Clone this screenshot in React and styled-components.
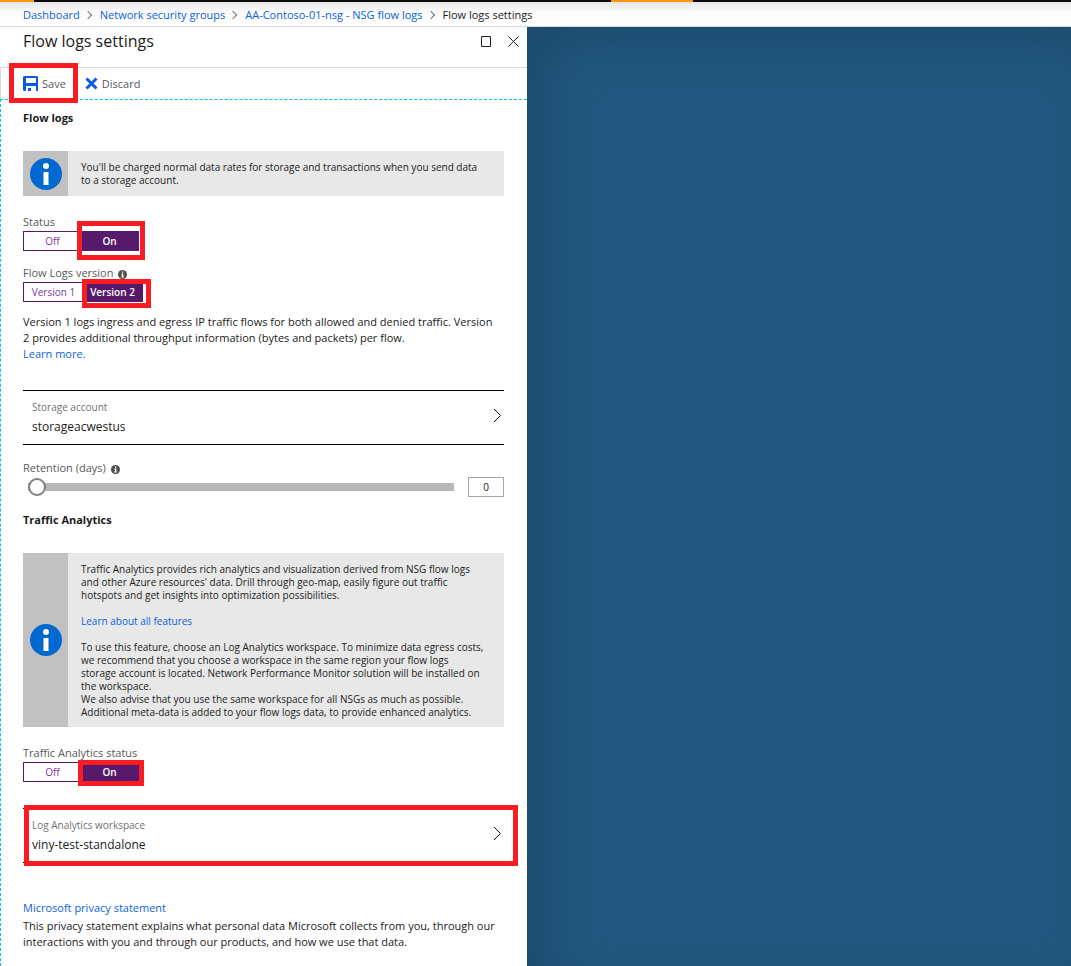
import React, { useState } from "react";
import styled, { createGlobalStyle, css } from "styled-components";

const color = {
  link: "#0b5fe0",
  text: "#1b1b1b",
  muted: "#595959",
  purple: "#571a6b",
  red: "#f91c22",
  cyan: "#00c4f5",
};

const GlobalStyle = createGlobalStyle`
  *, *::before, *::after { box-sizing: border-box; }
  body {
    margin: 0;
    background: #fff;
    color: ${color.text};
    font-family: "Open Sans", "Noto Sans", sans-serif;
    font-size: 11px;
    line-height: 16px;
  }
  button, input { font: inherit; color: inherit; }
`;

const Page = styled.div`
  display: flex;
  flex-direction: column;
  min-height: 100vh;
`;

const TopBar = styled.div`
  height: 2px;
  background: linear-gradient(90deg, #ff960f 34px, #0c0a09 34px 611px, #ff960f 611px 693px, #0c0a09 693px);
`;

const Breadcrumb = styled.nav`
  height: 25px;
  padding-left: 23px;
  border-bottom: 1px solid #d9d9d9;
  background: linear-gradient(#e6e6e6, #fbfbfb 10px, #fff);
`;

const Crumbs = styled.ol`
  display: flex;
  align-items: center;
  height: 26px;
  margin: 0;
  padding: 0;
  list-style: none;
  white-space: nowrap;
`;

const Crumb = styled.li`
  display: flex;
  align-items: center;
  & + &::before {
    content: "";
    width: 6px;
    height: 6px;
    margin: 0 9px 0 5px;
    border: solid #777;
    border-width: 1px 1px 0 0;
    transform: rotate(45deg);
  }
`;

const Link = styled.a`
  color: ${color.link};
  text-decoration: none;
`;

const Workspace = styled.div`
  display: flex;
  flex: 1;
`;

const Blade = styled.main`
  display: flex;
  flex-direction: column;
  flex: 0 0 527px;
  background: #fff;
`;

const Canvas = styled.div`
  flex: 1;
  background: #22577f;
  box-shadow: inset 24px 20px 60px -10px #1b4a6b;
`;

const BladeHeader = styled.header`
  display: flex;
  justify-content: space-between;
  height: 41px;
  padding: 4px 6px 0 23px;
  border-bottom: 1px solid #d9d9d9;
`;

const Title = styled.h1`
  margin: 0;
  font-size: 16px;
  font-weight: 500;
  line-height: 20px;
`;

const WindowButtons = styled.div`
  display: flex;
  gap: 11px;
`;

const WindowButton = styled.button`
  display: flex;
  align-items: center;
  justify-content: center;
  width: 16px;
  height: 20px;
  padding: 0;
  border: 0;
  background: none;
`;

const Toolbar = styled.div`
  display: flex;
  gap: 19px;
  height: 31px;
  padding-left: 22px;
  border-left: 1px solid #d9d9d9;
`;

const ToolButton = styled.button`
  position: relative;
  display: flex;
  align-items: center;
  gap: 4px;
  padding: 0;
  border: 0;
  background: none;
  color: ${color.muted};
  svg { display: block; }
`;

const Highlight = styled.span`
  position: absolute;
  inset: ${(p) => p.$inset};
  border: 5px solid ${color.red};
  pointer-events: none;
  z-index: 1;
`;

const Content = styled.div`
  flex: 1;
  padding: 10px 23px 16px 22px;
  border-top: 1px dashed ${color.cyan};
  border-left: 1px dashed ${color.cyan};
`;

const SectionTitle = styled.h2`
  margin: 0 0 25px;
  font-size: 11px;
  font-weight: 700;
  line-height: 16px;
`;

const Notice = styled.div`
  display: flex;
  min-height: 45px;
  margin-bottom: 18px;
  background: #e8e8e8;
  font-size: 10px;
  line-height: 13px;
`;

const NoticeIcon = styled.div`
  display: flex;
  flex: 0 0 45px;
  align-items: center;
  justify-content: center;
  background: #c1c1c1;
`;

const NoticeText = styled.div`
  flex: 1;
  padding: 10px 0 8px 13px;
  white-space: nowrap;
  p { margin: 0 0 13px; }
  p:last-child { margin: 0; }
`;

const Field = styled.fieldset`
  min-width: 0;
  margin: 0 0 ${(p) => p.$gap}px;
  padding: 0;
  border: 0;
`;

const legendText = css`
  display: flex;
  align-items: center;
  gap: 5px;
  padding: 0 0 2px;
  color: ${color.muted};
  line-height: 15px;
  svg { margin-top: 3px; }
`;

const Legend = styled.legend`${legendText}`;
const FieldLabel = styled.label`${legendText}`;

const Toggle = styled.div`
  display: grid;
  grid-template-columns: 1fr 1fr;
  width: ${(p) => p.$width}px;
  height: 20px;
  border: 1px solid ${color.purple};
`;

const Segment = styled.label`
  position: relative;
  display: flex;
  align-items: center;
  justify-content: center;
  color: #80379b;
  font-size: 10px;
  input {
    position: absolute;
    inset: 0;
    margin: 0;
    opacity: 0;
  }
  &:has(input:checked) {
    background: ${color.purple};
    color: #fff;
    font-weight: 600;
  }
`;

const Paragraph = styled.p`
  margin: 0;
  white-space: nowrap;
`;

const Selector = styled.button`
  position: relative;
  display: flex;
  align-items: center;
  justify-content: space-between;
  width: 100%;
  height: 55px;
  margin: ${(p) => p.$margin};
  padding: 0 2px 2px 9px;
  border: solid #000;
  border-width: 1px 0;
  background: none;
  font-size: 12px;
  text-align: left;
`;

const SelectorText = styled.span`
  display: grid;
  line-height: 19px;
`;

const SelectorLabel = styled.span`
  color: #707070;
  font-size: 10px;
`;

const SliderRow = styled.div`
  display: flex;
  align-items: center;
  gap: 14px;
  height: 20px;
  margin-bottom: 15px;
  padding-left: 5px;
`;

const Slider = styled.input`
  flex: 1;
  min-width: 0;
  height: 18px;
  margin: 0;
  appearance: none;
  background: none;
  &::-webkit-slider-runnable-track {
    height: 8px;
    background: #b7b7b7;
  }
  &::-webkit-slider-thumb {
    appearance: none;
    width: 18px;
    height: 18px;
    margin-top: -5px;
    border: 2px solid #808080;
    border-radius: 50%;
    background: #fff;
  }
`;

const DaysInput = styled.input`
  width: 36px;
  height: 20px;
  padding: 0;
  border: 1px solid #a6a6a6;
  background: #fff;
  font-size: 10px;
  text-align: center;
`;

const Footer = styled.footer`
  white-space: nowrap;
  p { margin: 2px 0 0; }
`;

const SaveIcon = () => (
  <svg width="15" height="15" viewBox="0 0 15 15" aria-hidden="true">
    <path fill="#0b5be0" fillRule="evenodd" d="M1 0h13l1 1v14h-2v-5H3v5H1l-1-1V1zM3 2v5h10V2z" />
    <path fill="#0b5be0" d="M5 12h3v3H5z" />
  </svg>
);

const DiscardIcon = () => (
  <svg width="13" height="13" viewBox="0 0 13 13" aria-hidden="true">
    <path stroke="#0b5be0" strokeWidth="3" d="M1.500 1.500l10 10M11.500 1.500l-10 10" />
  </svg>
);

const MaximizeIcon = () => (
  <svg width="11" height="11" viewBox="0 0 11 11" aria-hidden="true">
    <path fill="none" stroke="#222" d="M.5.5h9v10h-9z" />
  </svg>
);

const CloseIcon = () => (
  <svg width="11" height="11" viewBox="0 0 11 11" aria-hidden="true">
    <path fill="none" stroke="#222" d="M.5.5l10 10M10.5.5l-10 10" />
  </svg>
);

const BigInfoIcon = () => (
  <svg width="32" height="32" viewBox="0 0 32 32" aria-hidden="true">
    <circle cx="16" cy="16" r="16" fill="#0069cf" />
    <circle cx="16" cy="8" r="3" fill="#fff" />
    <path fill="#fff" d="M13.500 14h5v13h-5z" />
  </svg>
);

const HintIcon = () => (
  <svg width="9" height="9" viewBox="0 0 9 9" aria-hidden="true">
    <circle cx="4.5" cy="4.5" r="4.5" fill="#505050" />
    <path fill="#fff" d="M4 1.500h1.300v1.200H4zM3.300 3.600h2v3h.6v.8H3.200v-.8h.7V4.400h-.6z" />
  </svg>
);

const ChevronIcon = () => (
  <svg width="9" height="15" viewBox="0 0 9 15" aria-hidden="true">
    <path fill="none" stroke="#111" d="M1 0l6.500 6.500L1 13" />
  </svg>
);

function ToggleField({ legend, name, options, width, gap, highlight, hint }) {
  const [value, setValue] = useState(options[1]);
  return (
    <Field $gap={gap}>
      <Legend>
        {legend}
        {hint && <HintIcon />}
      </Legend>
      <Toggle $width={width}>
        {options.map((option, i) => (
          <Segment key={option}>
            <input type="radio" name={name} checked={value === option} onChange={() => setValue(option)} />
            {option}
            {i === 1 && <Highlight $inset={highlight} />}
          </Segment>
        ))}
      </Toggle>
    </Field>
  );
}

export default function App() {
  const [days, setDays] = useState(0);
  return (
    <Page>
      <GlobalStyle />
      <TopBar />
      <Breadcrumb aria-label="Breadcrumb">
        <Crumbs>
          <Crumb><Link href="#dashboard">Dashboard</Link></Crumb>
          <Crumb><Link href="#groups">Network security groups</Link></Crumb>
          <Crumb><Link href="#nsg">AA-Contoso-01-nsg - NSG flow logs</Link></Crumb>
          <Crumb aria-current="page">Flow logs settings</Crumb>
        </Crumbs>
      </Breadcrumb>
      <Workspace>
        <Blade>
          <BladeHeader>
            <Title>Flow logs settings</Title>
            <WindowButtons>
              <WindowButton aria-label="Maximize"><MaximizeIcon /></WindowButton>
              <WindowButton aria-label="Close"><CloseIcon /></WindowButton>
            </WindowButtons>
          </BladeHeader>
          <Toolbar>
            <ToolButton>
              <SaveIcon />
              Save
              <Highlight $inset="-5px -12px -4px -14px" />
            </ToolButton>
            <ToolButton><DiscardIcon />Discard</ToolButton>
          </Toolbar>
          <Content>
            <SectionTitle>Flow logs</SectionTitle>
            <Notice>
              <NoticeIcon><BigInfoIcon /></NoticeIcon>
              <NoticeText>
                You'll be charged normal data rates for storage and transactions when you send data<br />
                to a storage account.
              </NoticeText>
            </Notice>
            <ToggleField legend="Status" name="status" options={["Off", "On"]} width={116} gap={14} highlight="-11px -7px -10px -4px" />
            <ToggleField legend="Flow Logs version" name="version" options={["Version 1", "Version 2"]} width={120} gap={12} highlight="-4px -9px -7px -1px" hint />
            <Paragraph>
              Version 1 logs ingress and egress IP traffic flows for both allowed and denied traffic. Version<br />
              2 provides additional throughput information (bytes and packets) per flow.<br />
              <Link href="#learn">Learn more.</Link>
            </Paragraph>
            <Selector $margin="28px 0 15px">
              <SelectorText>
                <SelectorLabel>Storage account</SelectorLabel>
                storageacwestus
              </SelectorText>
              <ChevronIcon />
            </Selector>
            <FieldLabel htmlFor="retention">Retention (days)<HintIcon /></FieldLabel>
            <SliderRow>
              <Slider id="retention" type="range" min="0" max="365" value={days} onChange={(e) => setDays(Number(e.target.value))} />
              <DaysInput type="text" aria-label="Retention in days" value={days} onChange={(e) => setDays(Number(e.target.value) || 0)} />
            </SliderRow>
            <SectionTitle>Traffic Analytics</SectionTitle>
            <Notice>
              <NoticeIcon><BigInfoIcon /></NoticeIcon>
              <NoticeText>
                <p>
                  Traffic Analytics provides rich analytics and visualization derived from NSG flow logs<br />
                  and other Azure resources' data. Drill through geo-map, easily figure out traffic<br />
                  hotspots and get insights into optimization possibilities.
                </p>
                <p><Link href="#features">Learn about all features</Link></p>
                <p>
                  To use this feature, choose an Log Analytics workspace. To minimize data egress costs,<br />
                  we recommend that you choose a workspace in the same region your flow logs<br />
                  storage account is located. Network Performance Monitor solution will be installed on<br />
                  the workspace.<br />
                  We also advise that you use the same workspace for all NSGs as much as possible.<br />
                  Additional meta-data is added to your flow logs data, to provide enhanced analytics.
                </p>
              </NoticeText>
            </Notice>
            <ToggleField legend="Traffic Analytics status" name="analytics" options={["Off", "On"]} width={116} gap={26} highlight="-3px -6px -5px -3px" />
            <Selector $margin="0 0 37px">
              <SelectorText>
                <SelectorLabel>Log Analytics workspace</SelectorLabel>
                viny-test-standalone
              </SelectorText>
              <ChevronIcon />
              <Highlight $inset="-4px -14px -4px 1px" />
            </Selector>
            <Footer>
              <Link href="#privacy">Microsoft privacy statement</Link>
              <p>
                This privacy statement explains what personal data Microsoft collects from you, through our<br />
                interactions with you and through our products, and how we use that data.
              </p>
            </Footer>
          </Content>
        </Blade>
        <Canvas />
      </Workspace>
    </Page>
  );
}
